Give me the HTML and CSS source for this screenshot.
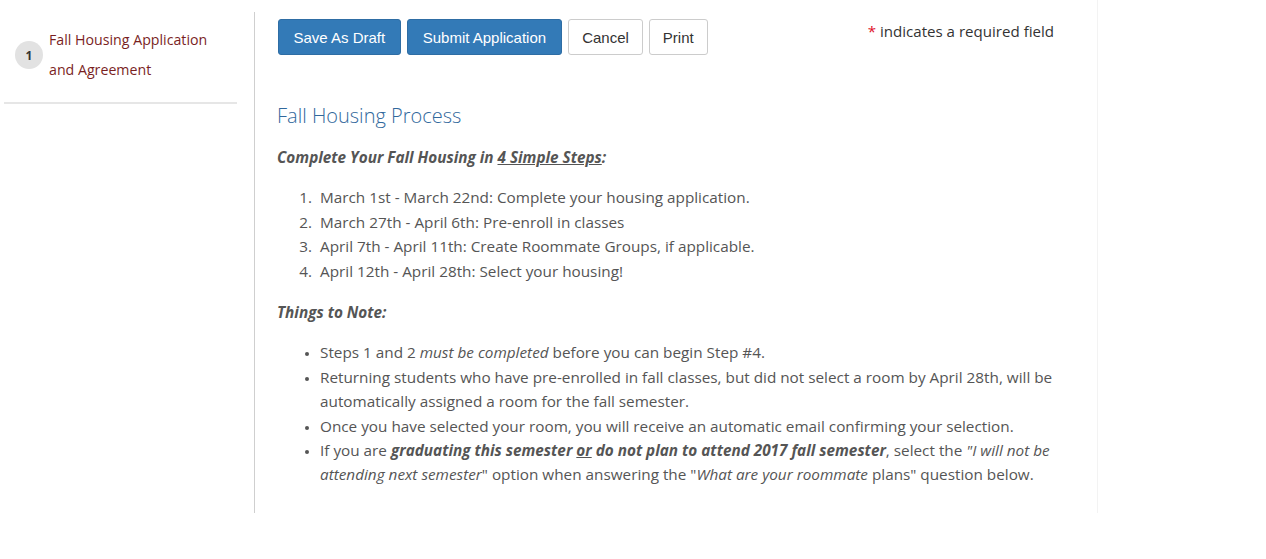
FILE: index.html
```html
<!DOCTYPE html>
<html>
<head>
<meta charset="utf-8">
<link rel="stylesheet" href="styles.css">
</head>
<body>
<div class="wrap">
  <aside class="sidebar">
    <div class="step">
      <span class="num">1</span>
      <span class="step-text">Fall Housing Application<br>and Agreement</span>
    </div>
  </aside>
  <main class="main">
    <div class="toolbar">
      <div class="buttons">
        <button class="btn btn-primary">Save As Draft</button>
        <button class="btn btn-primary">Submit Application</button>
        <button class="btn btn-default">Cancel</button>
        <button class="btn btn-default">Print</button>
      </div>
      <div class="required"><span class="star">*</span> indicates a required field</div>
    </div>
    <h2 class="title">Fall Housing Process</h2>
    <p class="lead"><strong><em>Complete Your Fall Housing in <u>4 Simple Steps</u>:</em></strong></p>
    <ol class="list steps">
      <li>March 1st - March 22nd: Complete your housing application.</li>
      <li>March 27th - April 6th: Pre-enroll in classes</li>
      <li>April 7th - April 11th: Create Roommate Groups, if applicable.</li>
      <li>April 12th - April 28th: Select your housing!</li>
    </ol>
    <p class="lead"><strong><em>Things to Note:</em></strong></p>
    <ul class="list bullets">
      <li>Steps 1 and 2 <em>must be completed</em> before you can begin Step #4.</li>
      <li>Returning students who have pre-enrolled in fall classes, but did not select a room by April 28th, will be automatically assigned a room for the fall semester.</li>
      <li>Once you have selected your room, you will receive an automatic email confirming your selection.</li>
      <li>If you are <strong><em>graduating this semester <u>or</u> do not plan to attend 2017 fall semester</em></strong>, select the <em>"I will not be attending next semester</em>" option when answering the "<em>What are your roommate</em> plans" question below.</li>
    </ul>
  </main>
</div>
</body>
</html>
```
FILE: styles.css
```css
* { box-sizing: border-box; }
html, body { margin: 0; padding: 0; background: #fff; }
body {
  font-family: "Open Sans", "Noto Sans", sans-serif;
  font-size: 15.3px;
  color: #555;
}
.wrap {
  display: flex;
  width: 1098px;
  height: 513px;
  border-right: 1px solid #f3f3f3;
}
.sidebar {
  width: 254px;
  flex: none;
  padding-left: 4px;
}
.step {
  width: 233px;
  display: flex;
  align-items: center;
  padding: 25px 0 17px 11px;
  border-bottom: 2px solid #e6e6e6;
}
.num {
  width: 28px;
  height: 28px;
  border-radius: 50%;
  background: #e2e2e2;
  color: #333;
  font-weight: 700;
  font-size: 12px;
  display: flex;
  align-items: center;
  justify-content: center;
  flex: none;
  margin-right: 6px;
}
.step-text {
  font-size: 14.2px;
  line-height: 30px;
  color: #7a1f1f;
}
.main {
  flex: 1;
  margin-top: 12px;
  border-left: 1px solid #cfcfcf;
  padding: 7px 0 0 22px;
}
.toolbar {
  display: flex;
  align-items: flex-start;
}
.buttons {
  display: flex;
  gap: 6px;
  margin-left: 1px;
}
.btn {
  font-family: "Liberation Sans", Arial, sans-serif;
  font-size: 15px;
  height: 36px;
  padding: 0 13px;
  border-radius: 3px;
  border: 1px solid #ccc;
  background: #fff;
  color: #333;
}
.btn-primary {
  background: #337ab7;
  border-color: #2e6da4;
  color: #fff;
  padding: 0 15px;
}
.btn-primary:first-child { padding: 0 14.5px; }
.required {
  margin-left: 160px;
  margin-top: 2px;
  font-size: 15.1px;
  color: #333;
}
.star { color: #e0102a; }
.title {
  margin: 50px 0 0;
  font-size: 20px;
  font-weight: 300;
  line-height: 22px;
  color: #31689c;
}
.lead {
  margin: 18px 0 0;
  line-height: 24.4px;
}
.list {
  margin: 16px 0 17px;
  padding-left: 43px;
  line-height: 24.4px;
  width: 790px;
}
.steps li::marker { content: counter(list-item) ".\00a0\00a0"; }
.bullets { list-style: disc; }
.bullets li::marker { font-size: 11px; }
.list + .lead { margin-top: 0; }
```
